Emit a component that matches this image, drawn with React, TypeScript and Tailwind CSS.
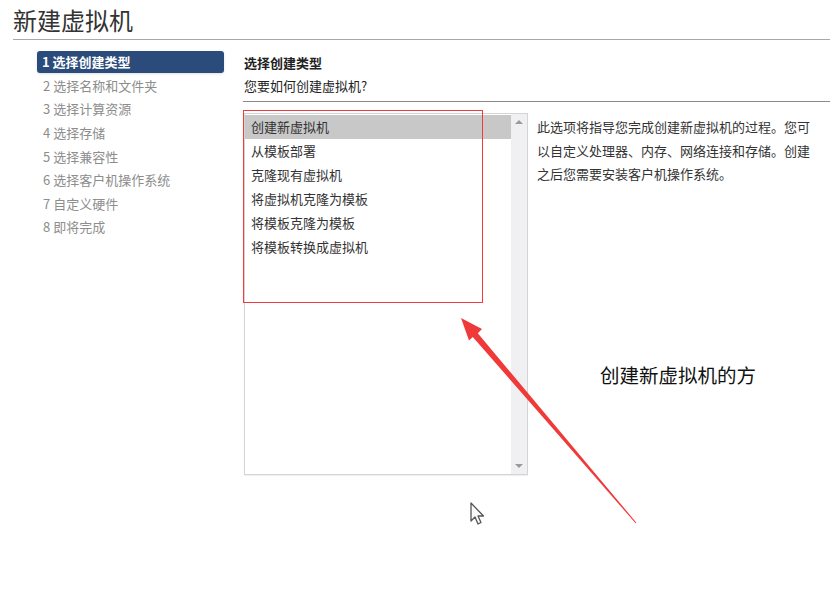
import React from 'react';

const steps = [
  '1 选择创建类型',
  '2 选择名称和文件夹',
  '3 选择计算资源',
  '4 选择存储',
  '5 选择兼容性',
  '6 选择客户机操作系统',
  '7 自定义硬件',
  '8 即将完成',
];

const types = [
  '创建新虚拟机',
  '从模板部署',
  '克隆现有虚拟机',
  '将虚拟机克隆为模板',
  '将模板克隆为模板',
  '将模板转换成虚拟机',
];

const font = { fontFamily: '"Noto Sans CJK SC", "Liberation Sans", sans-serif' };

export default function App() {
  return (
    <main className="relative w-[830px] h-[593px] bg-white overflow-hidden text-[#333]" style={font}>
      {/* header */}
      <div className="ml-[13px] h-[40px] flex items-center border-b border-[#a8a8a8]">
        <h1 className="text-[24px] leading-none text-[#333]">新建虚拟机</h1>
      </div>

      <div className="flex pt-[11px]">
        {/* steps nav */}
        <nav className="ml-[37px] w-[187px] flex flex-col">
          {steps.map((s, i) => (
            <div
              key={s}
              className={
                i === 0
                  ? 'h-[22px] mb-[1.6px] px-[5px] flex items-center rounded-[3px] bg-[#2b4c7b] text-white text-[13px] font-bold shadow-sm'
                  : 'h-[22px] mb-[1.6px] px-[6px] flex items-center text-[#8d8d8d] text-[13px]'
              }
            >
              {s}
            </div>
          ))}
        </nav>

        {/* right side */}
        <section className="ml-[19px] flex-1 flex flex-col">
          <div className="pl-[1px]">
            <div className="h-[23px] flex items-center text-[13px] font-bold text-[#222]">选择创建类型</div>
            <div className="h-[23px] flex items-center text-[13px] text-[#222]">您要如何创建虚拟机?</div>
          </div>
          <div className="mt-[4px] border-t border-[#8a8a8a]" />

          <div className="mt-[11px] flex">
            <div className="ml-[1px] w-[284px] h-[362px] border border-[#d4d4d4] flex shadow-[0_1px_1px_rgba(0,0,0,0.06)]">
              <ul className="flex-1 pt-[1px]">
                {types.map((t, i) => (
                  <li
                    key={t}
                    className={
                      i === 0
                        ? 'h-[24px] pl-[6px] flex items-center text-[13px] bg-[#c8c8c8] text-[#333]'
                        : 'h-[24px] pl-[6px] flex items-center text-[13px] text-[#333]'
                    }
                  >
                    {t}
                  </li>
                ))}
              </ul>
              <div className="w-[16px] bg-[#f0f0f2] flex flex-col items-center justify-between py-[6px]">
                <div className="w-0 h-0 border-l-[4px] border-r-[4px] border-b-[4px] border-l-transparent border-r-transparent border-b-[#9a9a9a]" />
                <div className="w-0 h-0 border-l-[4px] border-r-[4px] border-t-[4px] border-l-transparent border-r-transparent border-t-[#9a9a9a]" />
              </div>
            </div>
            <p className="ml-[9px] mt-[2px] w-[282px] text-[13px] leading-[23.5px] text-[#333]">
              此选项将指导您完成创建新虚拟机的过程。您可以自定义处理器、内存、网络连接和存储。创建之后您需要安装客户机操作系统。
            </p>
          </div>
        </section>
      </div>

      {/* annotation: red box */}
      <div className="absolute left-[243px] top-[110px] w-[240px] h-[193px] border border-[#f03c3c]" />

      {/* annotation: arrow */}
      <svg className="absolute left-0 top-0" width="830" height="593" viewBox="0 0 830 593">
        <polygon
          points="461,318 482,329 477.8,333.2 636.4,522.7 635.6,523.3 472.8,337 469,340.5"
          fill="#f03a3a"
        />
      </svg>

      {/* annotation label */}
      <div className="absolute left-[600px] top-[362px] text-[19.5px] leading-[26px] text-[#111]">创建新虚拟机的方</div>

      {/* mouse cursor */}
      <svg className="absolute left-[469px] top-[502px]" width="18" height="26" viewBox="0 0 18 26">
        <path
          d="M2 1 L2 19 L6 15 L9 22 L12 20.5 L9 14 L14.5 14 Z"
          fill="#fafafa"
          stroke="#555"
          strokeWidth="1.3"
          strokeLinejoin="round"
        />
      </svg>
    </main>
  );
}
